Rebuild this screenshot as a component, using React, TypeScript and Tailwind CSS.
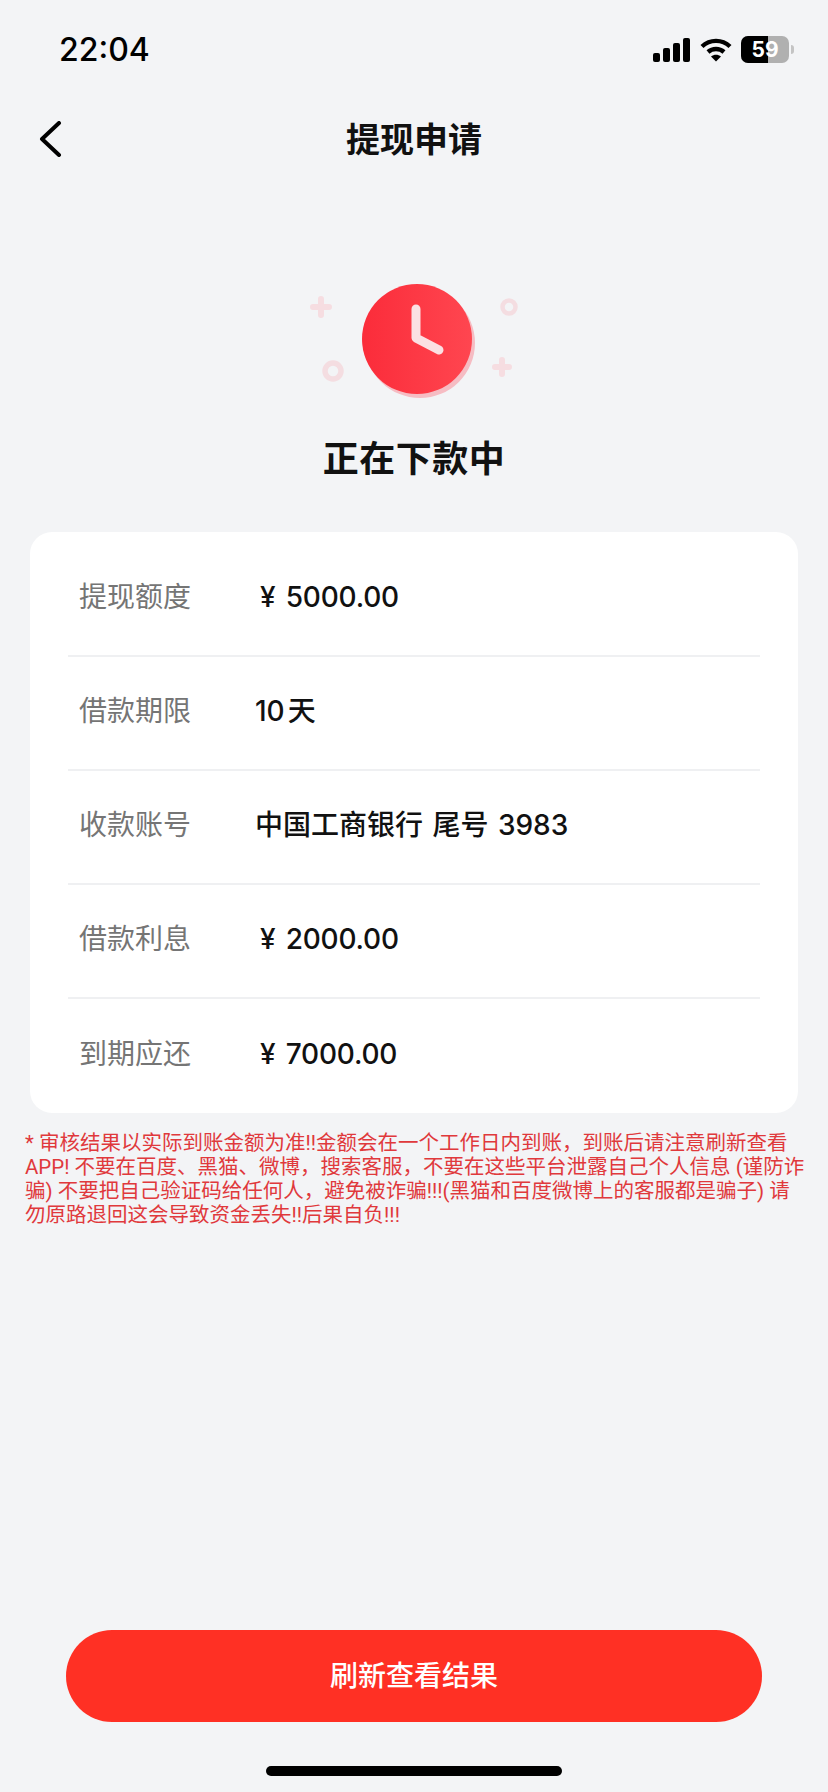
const font = "font-['Inter','Noto_Sans_CJK_SC',sans-serif]";

function Row({ label, children, last }: { label: string; children: React.ReactNode; last?: boolean }) {
  return (
    <div className={`mx-[38px] flex h-[114px] items-center pb-[5px] pl-[11px] ${last ? "" : "border-b-2 border-[#eff0f2]"}`}>
      <span className="w-[176px] text-[28px] text-[#757575]">{label}</span>
      <span className="text-[28px] font-medium text-[#111111] [word-spacing:2px]">{children}</span>
    </div>
  );
}

function Money({ value }: { value: string }) {
  return (
    <span className="pl-[5px] tracking-[-0.2px] [word-spacing:3px]">¥ {value}</span>
  );
}

function StatusIcons() {
  return (
    <div className="flex items-center">
      <svg width="37" height="24" viewBox="0 0 37 24" fill="#000">
        <rect x="0" y="15" width="7" height="9" rx="2" />
        <rect x="10" y="10" width="7" height="14" rx="2" />
        <rect x="20" y="5" width="7" height="19" rx="2" />
        <rect x="30" y="0" width="7" height="24" rx="2" />
      </svg>
      <svg className="ml-[10px]" width="32" height="25" viewBox="0 0 32 25" fill="none" stroke="#000" strokeWidth="4.4">
        <path d="M2 9.500C10 2 22 2 30 9.500" />
        <path d="M8 15C12.500 11 19.500 11 24 15" />
        <path d="M16 24.500l-5-5c3-2.400 7-2.400 10 0z" fill="#000" stroke="none" />
      </svg>
      <div className="ml-[9px] flex items-center">
        <div className="relative flex h-[27px] w-[48px] items-center justify-center overflow-hidden rounded-[7px] bg-[#b0b0b0]">
          <div className="absolute inset-y-0 left-0 w-[27px] bg-black" />
          <span className="relative text-[21px] font-bold leading-none text-white">59</span>
        </div>
        <div className="ml-[2px] h-[9px] w-[3px] rounded-r-full bg-[#c4c4c4]" />
      </div>
    </div>
  );
}

function Clock() {
  return (
    <svg width="214" height="120" viewBox="0 0 214 120" fill="none">
      <defs>
        <linearGradient id="clockFill" x1="0" y1="0" x2="1" y2="0">
          <stop offset="0" stopColor="#fb2c3a" />
          <stop offset="1" stopColor="#ff4650" />
        </linearGradient>
      </defs>
      <path d="M3 27h16M11 19v16" stroke="#f6dde1" strokeWidth="6" strokeLinecap="round" />
      <circle cx="199" cy="27" r="6.500" stroke="#f4dde1" strokeWidth="4.500" />
      <circle cx="23" cy="91" r="8" stroke="#f4dde1" strokeWidth="5.500" />
      <path d="M185 87h14M192 80v14" stroke="#f6dde1" strokeWidth="6" strokeLinecap="round" />
      <circle cx="110" cy="63" r="55" fill="#f6bcc3" />
      <circle cx="107" cy="59" r="55" fill="url(#clockFill)" />
      <path d="M106 29v29l23 12" stroke="#fbe0e3" strokeWidth="9" strokeLinecap="round" strokeLinejoin="round" />
    </svg>
  );
}

export default function App() {
  return (
    <div className={`flex h-[1792px] w-[828px] flex-col overflow-hidden bg-[#f3f4f6] ${font}`}>
      <div className="flex h-[100px] items-start justify-between pl-[59px] pr-[34px] pt-[32px]">
        <span className="text-[32px] font-medium leading-[36px] text-black">22:04</span>
        <div className="pt-[4px]"><StatusIcons /></div>
      </div>

      <div className="relative flex h-[78px] items-center justify-center">
        <svg className="absolute left-[38px] top-[21px]" width="24" height="36" viewBox="0 0 24 36" fill="none" stroke="#000" strokeWidth="4" strokeLinecap="round" strokeLinejoin="round">
          <path d="M21 2L4 18l17 16" />
        </svg>
        <span className="text-[34px] font-bold text-[#111111]">提现申请</span>
      </div>

      <div className="mt-[102px] flex justify-center pl-[6px]">
        <Clock />
      </div>

      <div className="mt-[34px] text-center text-[36px] font-bold leading-[50px] tracking-[0.5px] text-[#111111]">正在下款中</div>

      <div className="mx-[30px] mt-[48px] h-[581px] rounded-[22px] bg-white pt-[11px]">
        <Row label="提现额度"><Money value="5000.00" /></Row>
        <Row label="借款期限">10<span className="ml-[3px]">天</span></Row>
        <Row label="收款账号">中国工商银行 尾号 3983</Row>
        <Row label="借款利息"><Money value="2000.00" /></Row>
        <Row label="到期应还" last><Money value="7000.00" /></Row>
      </div>

      <p className="ml-[25px] mt-[18px] w-[785px] font-['Roboto','Noto_Sans_CJK_SC',sans-serif] text-[20.5px] leading-[24px] text-[#e0393c]">
        * 审核结果以实际到账金额为准!!金额会在一个工作日内到账，到账后请注意刷新查看<br />
        APP! 不要在百度、黑猫、微博，搜索客服，不要在这些平台泄露自己个人信息 (谨防诈<br />
        骗) 不要把自己验证码给任何人，避免被诈骗!!!(黑猫和百度微博上的客服都是骗子) 请<br />
        勿原路退回这会导致资金丢失!!后果自负!!!
      </p>

      <div className="flex-1" />

      <div className="mx-[66px] flex h-[92px] items-center justify-center rounded-full bg-[#ff3024] text-[28px] font-medium text-white">
        刷新查看结果
      </div>

      <div className="mx-auto mb-[16px] mt-[44px] h-[10px] w-[296px] rounded-full bg-black" />
    </div>
  );
}
